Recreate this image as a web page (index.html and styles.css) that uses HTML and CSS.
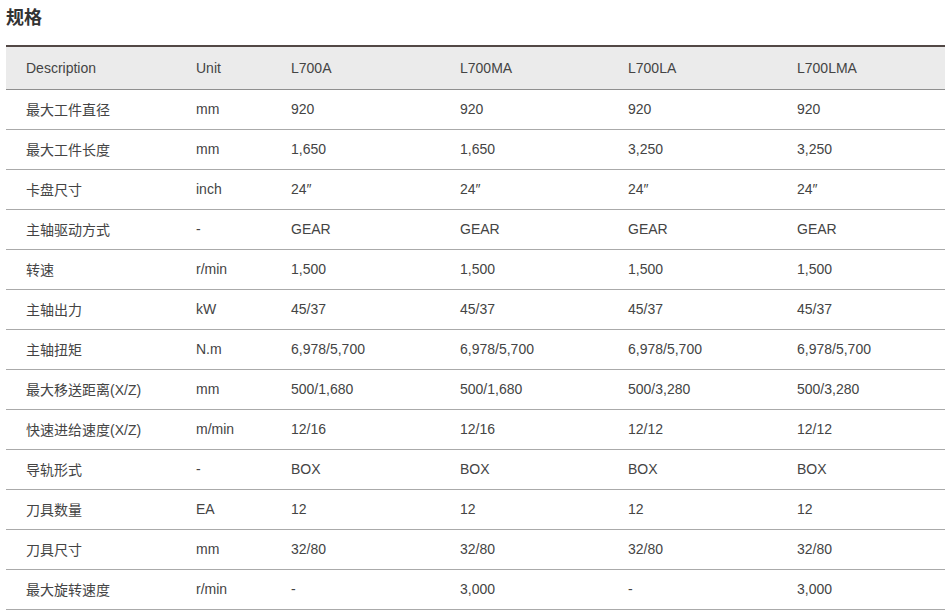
FILE: index.html
```html
<!DOCTYPE html>
<html lang="zh">
<head>
<meta charset="utf-8">
<link rel="stylesheet" href="styles.css">
</head>
<body>
<h2 class="title">规格</h2>
<table class="spec">
<colgroup>
<col class="c1"><col class="c2"><col class="c3"><col class="c4"><col class="c5"><col class="c6">
</colgroup>
<thead>
<tr><th>Description</th><th>Unit</th><th>L700A</th><th>L700MA</th><th>L700LA</th><th>L700LMA</th></tr>
</thead>
<tbody>
<tr><td>最大工件直径</td><td>mm</td><td>920</td><td>920</td><td>920</td><td>920</td></tr>
<tr><td>最大工件长度</td><td>mm</td><td>1,650</td><td>1,650</td><td>3,250</td><td>3,250</td></tr>
<tr><td>卡盘尺寸</td><td>inch</td><td>24″</td><td>24″</td><td>24″</td><td>24″</td></tr>
<tr><td>主轴驱动方式</td><td>-</td><td>GEAR</td><td>GEAR</td><td>GEAR</td><td>GEAR</td></tr>
<tr><td>转速</td><td>r/min</td><td>1,500</td><td>1,500</td><td>1,500</td><td>1,500</td></tr>
<tr><td>主轴出力</td><td>kW</td><td>45/37</td><td>45/37</td><td>45/37</td><td>45/37</td></tr>
<tr><td>主轴扭矩</td><td>N.m</td><td>6,978/5,700</td><td>6,978/5,700</td><td>6,978/5,700</td><td>6,978/5,700</td></tr>
<tr><td>最大移送距离(X/Z)</td><td>mm</td><td>500/1,680</td><td>500/1,680</td><td>500/3,280</td><td>500/3,280</td></tr>
<tr><td>快速进给速度(X/Z)</td><td>m/min</td><td>12/16</td><td>12/16</td><td>12/12</td><td>12/12</td></tr>
<tr><td>导轨形式</td><td>-</td><td>BOX</td><td>BOX</td><td>BOX</td><td>BOX</td></tr>
<tr><td>刀具数量</td><td>EA</td><td>12</td><td>12</td><td>12</td><td>12</td></tr>
<tr><td>刀具尺寸</td><td>mm</td><td>32/80</td><td>32/80</td><td>32/80</td><td>32/80</td></tr>
<tr><td>最大旋转速度</td><td>r/min</td><td>-</td><td>3,000</td><td>-</td><td>3,000</td></tr>
</tbody>
</table>
</body>
</html>
```
FILE: styles.css
```css
html, body {
  margin: 0;
  padding: 0;
  background: #fff;
}
body {
  padding: 0 6px;
  font-family: "Liberation Sans", Arial, "Noto Sans CJK SC", sans-serif;
  color: #444;
}
.title {
  margin: 0;
  padding-top: 5px;
  height: 40px;
  box-sizing: border-box;
  font-size: 18px;
  line-height: 22px;
  font-weight: bold;
  color: #333;
  font-family: "Noto Sans CJK SC", sans-serif;
}
.spec {
  width: 939px;
  border-collapse: collapse;
  table-layout: fixed;
  border-top: 2px solid #524845;
  font-size: 14px;
  margin-top: 5px;
}
.c1 { width: 170px; }
.c2 { width: 95px; }
.c3 { width: 169px; }
.c4 { width: 168px; }
.c5 { width: 169px; }
.c6 { width: 168px; }
.spec th {
  background: #ebebeb;
  font-weight: normal;
  text-align: left;
  height: 43px;
  padding: 0 0 0 20px;
  border-bottom: 1px solid #8f8f8f;
  box-sizing: border-box;
  color: #444;
}
.spec td {
  height: 40px;
  padding: 0 0 0 20px;
  border-bottom: 1px solid #aaa;
  box-sizing: border-box;
  color: #444;
}
```
